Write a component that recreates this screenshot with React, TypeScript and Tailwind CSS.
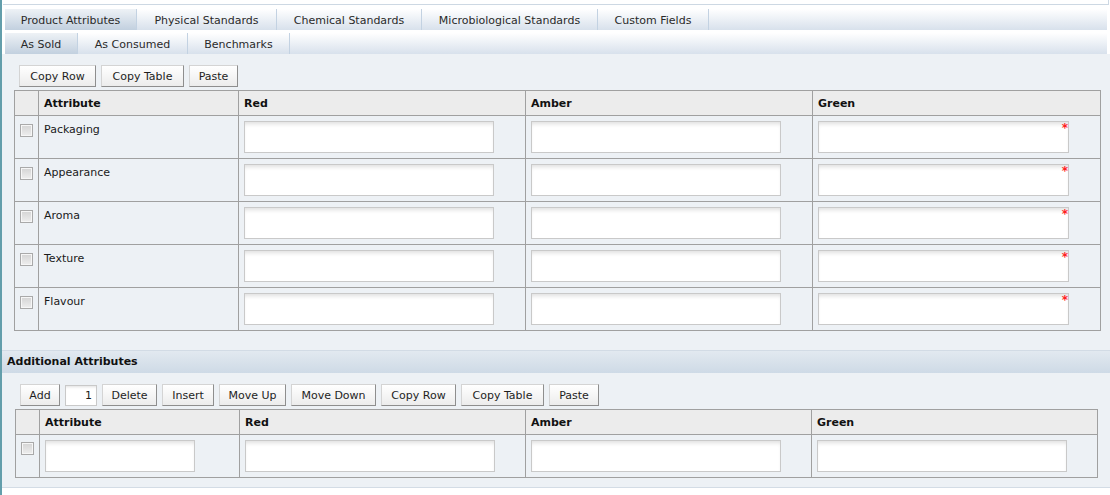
import React from "react";

const tabs1 = [
  { label: "Product Attributes", w: "w-[132px]", active: true },
  { label: "Physical Standards", w: "w-[140px]", active: false },
  { label: "Chemical Standards", w: "w-[145px]", active: false },
  { label: "Microbiological Standards", w: "w-[176px]", active: false },
  { label: "Custom Fields", w: "w-[111px]", active: false },
];
const tabs2 = [
  { label: "As Sold", w: "w-[73px]", active: true },
  { label: "As Consumed", w: "w-[110px]", active: false },
  { label: "Benchmarks", w: "w-[102px]", active: false },
];

function TabRow({ tabs }: { tabs: { label: string; w: string; active: boolean }[] }) {
  return (
    <div className="ml-[3px] mr-[3px] h-[21px] flex bg-linear-to-b from-white to-[#d8e1ec]">
      {tabs.map((t) => (
        <div
          key={t.label}
          className={`${t.w} h-full flex items-center justify-center pt-[3px] border-r border-[#c3d2e2] text-[#2a2a2a] ${
            t.active ? "bg-linear-to-b from-[#eef2f6] to-[#c2d0df]" : ""
          }`}
        >
          {t.label}
        </div>
      ))}
    </div>
  );
}

function Btn({ w, children }: { w: string; children: React.ReactNode }) {
  return (
    <div
      className={`${w} h-[22px] flex items-center justify-center pt-[2px] border border-t-[#d4d4d4] border-l-[#d4d4d4] border-b-[#8e8e8e] border-r-[#8e8e8e] bg-linear-to-b from-white to-[#ececec] text-[#1e1e1e]`}
    >
      {children}
    </div>
  );
}

function Input({ w, required }: { w: string; required?: boolean }) {
  return (
    <div
      className={`${w} h-[32px] relative bg-white border border-[#c9c9c9] shadow-[inset_0_4px_4px_-2px_rgba(0,0,0,0.13)]`}
    >
      {required && (
        <span className="absolute right-[0px] top-[0px] text-[#ff2020] text-[12px] leading-none font-bold">
          *
        </span>
      )}
    </div>
  );
}

function Check({ top }: { top: string }) {
  return (
    <div className={`ml-[5px] ${top} w-[13px] h-[13px] border border-[#a9a9a9] p-[1px] bg-[#f6f6f6]`}>
      <div className="w-full h-full bg-linear-to-b from-[#d6d6d6] to-[#ececec]" />
    </div>
  );
}

const rows = ["Packaging", "Appearance", "Aroma", "Texture", "Flavour"];

const cellBase = "border-r border-b border-[#a0a0a0]";

export default function App() {
  return (
    <div className="flex w-[1110px] h-[495px] bg-white font-['DejaVu_Sans',sans-serif] text-[11px] overflow-hidden">
      <div className="w-[2px] shrink-0 bg-[#639eab]" />
      <div className="flex-1 flex flex-col">
        <div className="h-[5px] ml-[1px] mr-[1px] border-b border-r border-[#cdd8e3]" />
        <div className="h-[4px]" />
        <TabRow tabs={tabs1} />
        <div className="h-[3px]" />
        <TabRow tabs={tabs2} />
        <div className="h-[434px] bg-[#edf1f5] border-b border-[#d3dce5] flex flex-col">
          <div className="pt-[11px] pl-[17px] flex gap-[5px]">
            <Btn w="w-[77px]">Copy Row</Btn>
            <Btn w="w-[83px]">Copy Table</Btn>
            <Btn w="w-[49px]">Paste</Btn>
          </div>
          {/* Table 1 */}
          <div className="mt-[3px] ml-[12px] w-[1087px] border-l border-t border-[#a0a0a0] grid grid-cols-[24px_200px_287px_287px_288px]">
            <div className={`${cellBase} h-[25px] bg-[#ececec]`} />
            {["Attribute", "Red", "Amber", "Green"].map((h) => (
              <div key={h} className={`${cellBase} h-[25px] bg-[#ececec] flex items-center pl-[5px] pt-[2px] font-bold text-[#111]`}>
                {h}
              </div>
            ))}
            {rows.map((r) => (
              <React.Fragment key={r}>
                <div className={`${cellBase} h-[43px]`}>
                  <Check top="mt-[8px]" />
                </div>
                <div className={`${cellBase} h-[43px] pl-[5px] pt-[6px] leading-[15px] text-[#1a1a1a]`}>{r}</div>
                <div className={`${cellBase} h-[43px] pl-[5px] pt-[5px]`}>
                  <Input w="w-[250px]" />
                </div>
                <div className={`${cellBase} h-[43px] pl-[5px] pt-[5px]`}>
                  <Input w="w-[250px]" />
                </div>
                <div className={`${cellBase} h-[43px] pl-[5px] pt-[5px]`}>
                  <Input w="w-[251px]" required />
                </div>
              </React.Fragment>
            ))}
          </div>
          {/* Band */}
          <div className="mt-[19px] h-[23px] border-t border-[#d2dbe5] bg-linear-to-b from-[#e2e9f0] to-[#cedae6] flex items-center pl-[5px] font-bold text-[#111]">
            Additional Attributes
          </div>
          <div className="mt-[11px] pl-[18px] flex gap-[5px]">
            <Btn w="w-[40px]">Add</Btn>
            <div className="w-[32px] h-[21px] bg-white border border-[#c9c9c9] shadow-[inset_0_3px_3px_-2px_rgba(0,0,0,0.12)] flex items-center justify-end pr-[4px] pt-[2px] text-[#1a1a1a] mt-[1px]">
              1
            </div>
            <Btn w="w-[55px]">Delete</Btn>
            <Btn w="w-[52px]">Insert</Btn>
            <Btn w="w-[67px]">Move Up</Btn>
            <Btn w="w-[85px]">Move Down</Btn>
            <Btn w="w-[75px]">Copy Row</Btn>
            <Btn w="w-[83px]">Copy Table</Btn>
            <Btn w="w-[50px]">Paste</Btn>
          </div>
          {/* Table 2 */}
          <div className="mt-[3px] ml-[13px] w-[1083px] border-l border-t border-[#a0a0a0] grid grid-cols-[24px_200px_286px_286px_286px]">
            <div className={`${cellBase} h-[25px] bg-[#ececec]`} />
            {["Attribute", "Red", "Amber", "Green"].map((h) => (
              <div key={h} className={`${cellBase} h-[25px] bg-[#ececec] flex items-center pl-[5px] pt-[2px] font-bold text-[#111]`}>
                {h}
              </div>
            ))}
            <div className={`${cellBase} h-[43px]`}>
              <Check top="mt-[7px]" />
            </div>
            <div className={`${cellBase} h-[43px] pl-[5px] pt-[5px]`}>
              <Input w="w-[150px]" />
            </div>
            <div className={`${cellBase} h-[43px] pl-[5px] pt-[5px]`}>
              <Input w="w-[250px]" />
            </div>
            <div className={`${cellBase} h-[43px] pl-[5px] pt-[5px]`}>
              <Input w="w-[250px]" />
            </div>
            <div className={`${cellBase} h-[43px] pl-[5px] pt-[5px]`}>
              <Input w="w-[250px]" />
            </div>
          </div>
        </div>
      </div>
    </div>
  );
}
